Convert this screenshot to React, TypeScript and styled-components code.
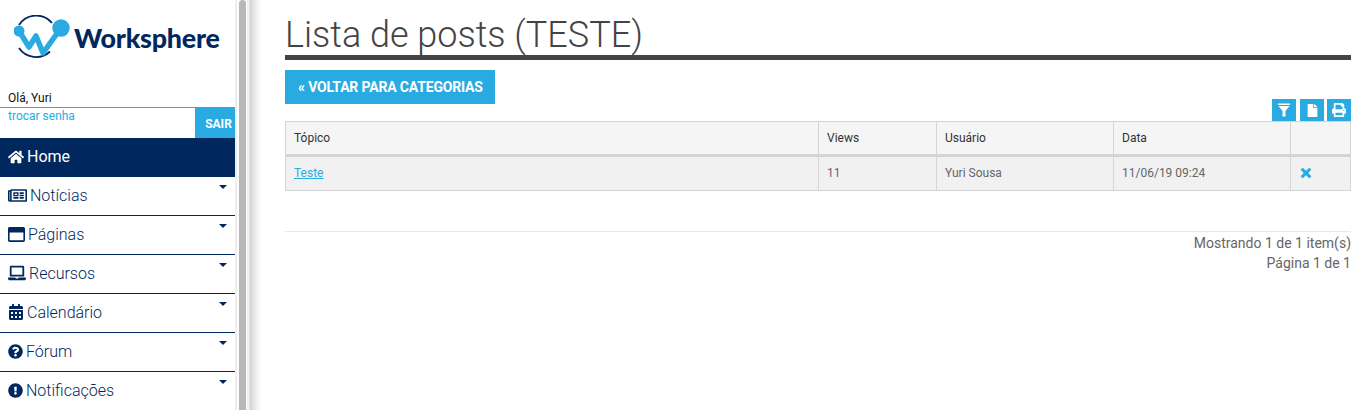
import React from 'react'
import styled, { createGlobalStyle } from 'styled-components'
import {
  FaCalendarAlt,
  FaExclamationCircle,
  FaFile,
  FaHome,
  FaLaptop,
  FaPrint,
  FaQuestionCircle,
  FaRegNewspaper,
  FaRegWindowMaximize,
  FaTimes,
} from 'react-icons/fa'

const navy = '#00285e'
const blue = '#29abe2'

const GlobalStyle = createGlobalStyle`
  html, body {
    margin: 0;
    height: 100%;
    overflow: hidden;
    background: #fff;
    font-family: Roboto, "Liberation Sans", sans-serif;
  }
`

const Page = styled.div`
  display: flex;
  width: 1362px;
  height: 410px;
  overflow: hidden;
`

const Sidebar = styled.aside`
  width: 235px;
  flex-shrink: 0;
  display: flex;
  flex-direction: column;
`

const LogoBlock = styled.div`
  height: 90px;
  flex-shrink: 0;
  display: flex;
  align-items: flex-start;
  padding: 15px 0 0 14px;
  box-sizing: border-box;
  gap: 4px;
`

const LogoText = styled.span`
  font-family: Lato, sans-serif;
  font-weight: 900;
  font-size: 26.8px;
  line-height: 30px;
  margin-top: 8px;
  color: ${navy};
  letter-spacing: -0.2px;
`

const Greeting = styled.div`
  height: 17px;
  flex-shrink: 0;
  box-sizing: border-box;
  padding-left: 8px;
  font-size: 12px;
  line-height: 16px;
  color: #111;
`

const UserRow = styled.div`
  display: flex;
  height: 31px;
  flex-shrink: 0;
  border-top: 1px solid ${blue};
  box-sizing: border-box;
`

const ChangePassword = styled.a`
  flex: 1;
  padding: 1px 0 0 8px;
  font-size: 12px;
  line-height: 15px;
  color: ${blue};
`

const LogoutButton = styled.button`
  width: 40px;
  padding: 2px 0 0 7px;
  border: 0;
  background: ${blue};
  color: #fff;
  font: 700 12px Roboto, sans-serif;
`

const NavItem = styled.div<{ $active?: boolean }>`
  position: relative;
  height: 39px;
  box-sizing: border-box;
  display: flex;
  align-items: center;
  gap: 3px;
  padding: 0 0 2px 8px;
  font-size: 16px;
  font-weight: ${({ $active }) => ($active ? 400 : 300)};
  color: ${({ $active }) => ($active ? '#fff' : navy)};
  background: ${({ $active }) => ($active ? navy : '#fff')};
  border-bottom: ${({ $active }) => ($active ? 'none' : `1px solid ${navy}`)};
  flex-shrink: 0;

  svg {
    flex-shrink: 0;
  }
`

const Caret = styled.span`
  position: absolute;
  top: 8px;
  right: 8px;
  border-left: 4px solid transparent;
  border-right: 4px solid transparent;
  border-top: 4px solid ${navy};
`

const ScrollGutter = styled.div`
  width: 13px;
  flex-shrink: 0;
  box-sizing: border-box;
  border-left: 2px solid #eee;
  border-right: 1px solid #eee;
  padding: 0 1px 0 2px;
`

const ScrollThumb = styled.div`
  height: 100%;
  background: #b8b8b8;
  border-radius: 4px 4px 0 0;
`

const Main = styled.main`
  flex: 1;
  padding: 0 12px 0 37px;
  background: linear-gradient(to right, #fff 0, #d4d4d4 2px, #f2f2f2 9px, #fff 14px) no-repeat left / 14px 100%;
`

const Title = styled.h1`
  margin: 0 0 10px;
  height: 60px;
  box-sizing: border-box;
  border-bottom: 5px solid #444;
  padding-top: 14px;
  font-weight: 300;
  font-size: 36px;
  line-height: 43px;
  white-space: nowrap;
  color: #444;
`

const BackButton = styled.a`
  display: inline-block;
  padding: 0 12px 0 13px;
  height: 34px;
  line-height: 34px;
  background: ${blue};
  color: #fff;
  font-weight: 700;
  font-size: 14px;
  letter-spacing: -0.17px;
`

const Toolbar = styled.div`
  display: flex;
  justify-content: flex-end;
  gap: 3px;
  margin-top: -5px;
`

const ToolButton = styled.button`
  width: 24px;
  height: 22px;
  padding: 0;
  border: 0;
  display: flex;
  align-items: center;
  justify-content: center;
  background: ${blue};
  color: #fff;

  &:first-child {
    margin-right: 1px;
  }
`

const Table = styled.table`
  width: 1065px;
  table-layout: fixed;
  border-collapse: collapse;
  font-size: 12px;
  color: #666;
`

const Th = styled.th<{ $width: number }>`
  width: ${({ $width }) => $width}px;
  height: 34px;
  padding: 0 8px;
  box-sizing: border-box;
  text-align: left;
  font-weight: 400;
  color: #333;
  background: #f5f5f5;
  border: 1px solid #d5d5d5;
  border-bottom-width: 3px;
`

const Td = styled.td`
  height: 35px;
  padding: 0 8px 2px;
  box-sizing: border-box;
  background: #f1f1f1;
  border: 1px solid #d5d5d5;
`

const TopicLink = styled.a`
  color: ${blue};
  text-decoration: underline;
`

const RemoveIcon = styled(FaTimes)`
  display: block;
  color: ${blue};
  font-size: 14px;
  stroke: currentColor;
  stroke-width: 25;
`

const Footer = styled.div`
  margin-top: 40px;
  border-top: 1px solid #e8e8e8;
  padding-top: 1px;
  text-align: right;
  font-size: 14px;
  line-height: 20px;
  color: #666;
`

const navItems = [
  { label: 'Notícias', icon: <FaRegNewspaper size={19} /> },
  { label: 'Páginas', icon: <FaRegWindowMaximize size={17} /> },
  { label: 'Recursos', icon: <FaLaptop size={18} /> },
  { label: 'Calendário', icon: <FaCalendarAlt size={16} /> },
  { label: 'Fórum', icon: <FaQuestionCircle size={15} /> },
  { label: 'Notificações', icon: <FaExclamationCircle size={15} /> },
]

const Logo = () => (
  <svg width="56" height="46" viewBox="0 0 56 46">
    <path d="M5 10A20.5 20.5 0 0 1 38 8" fill="none" stroke={navy} strokeWidth="1.8" />
    <path d="M5 33A20.5 20.5 0 0 0 36 36.5" fill="none" stroke={navy} strokeWidth="1.8" />
    <path
      d="M5 16L15 32L22 21L29 38L47 13"
      fill="none"
      stroke={blue}
      strokeWidth="5.5"
      strokeLinejoin="round"
      strokeLinecap="round"
    />
    <circle cx="5" cy="16" r="5.5" fill={blue} />
    <circle cx="47" cy="13" r="8.7" fill={blue} />
  </svg>
)

const FilterIcon = () => (
  <svg width="14" height="14" viewBox="0 0 14 14" fill="currentColor">
    <rect x="1" y="0.5" width="12" height="1.5" />
    <path d="M1.5 3H12.5L8.5 8V13.5H5.5V8Z" />
  </svg>
)

const App: React.FC = () => (
  <Page>
    <GlobalStyle />
    <Sidebar>
      <LogoBlock>
        <Logo />
        <LogoText>Worksphere</LogoText>
      </LogoBlock>
      <Greeting>Olá, Yuri</Greeting>
      <UserRow>
        <ChangePassword>trocar senha</ChangePassword>
        <LogoutButton>SAIR</LogoutButton>
      </UserRow>
      <NavItem $active>
        <FaHome size={16} />
        Home
      </NavItem>
      {navItems.map((item) => (
        <NavItem key={item.label}>
          {item.icon}
          {item.label}
          <Caret />
        </NavItem>
      ))}
    </Sidebar>
    <ScrollGutter>
      <ScrollThumb />
    </ScrollGutter>
    <Main>
      <Title>Lista de posts (TESTE)</Title>
      <BackButton>« VOLTAR PARA CATEGORIAS</BackButton>
      <Toolbar>
        <ToolButton><FilterIcon /></ToolButton>
        <ToolButton><FaFile size={13} /></ToolButton>
        <ToolButton><FaPrint size={14} /></ToolButton>
      </Toolbar>
      <Table>
        <thead>
          <tr>
            <Th $width={533}>Tópico</Th>
            <Th $width={118}>Views</Th>
            <Th $width={177}>Usuário</Th>
            <Th $width={177}>Data</Th>
            <Th $width={60} />
          </tr>
        </thead>
        <tbody>
          <tr>
            <Td><TopicLink>Teste</TopicLink></Td>
            <Td>11</Td>
            <Td>Yuri Sousa</Td>
            <Td>11/06/19 09:24</Td>
            <Td><RemoveIcon /></Td>
          </tr>
        </tbody>
      </Table>
      <Footer>
        <div>Mostrando 1 de 1 item(s)</div>
        <div>Página 1 de 1</div>
      </Footer>
    </Main>
  </Page>
)

export default App
